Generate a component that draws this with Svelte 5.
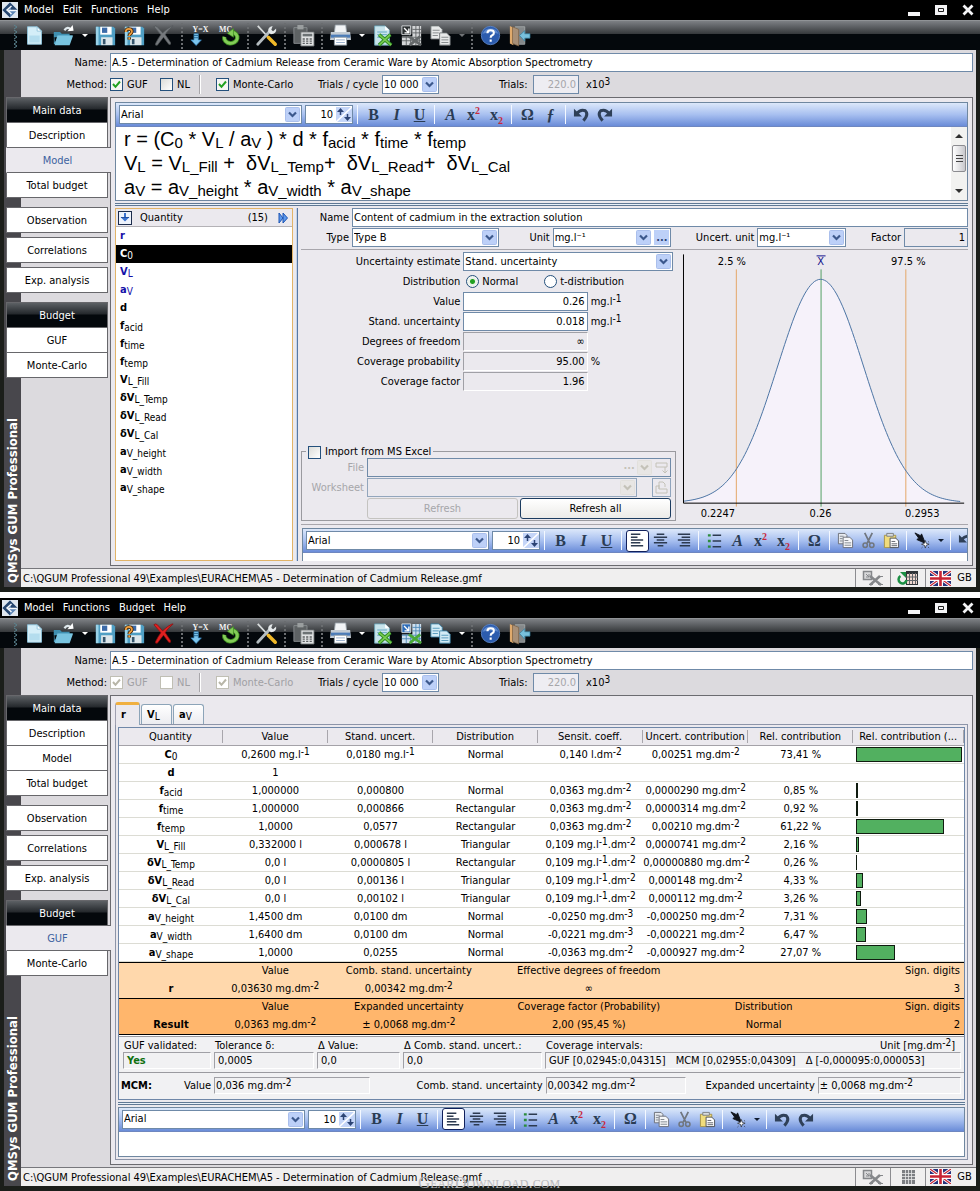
<script>
  const path = 'C:\\QGUM Professional 49\\Examples\\EURACHEM\\A5 - Determination of Cadmium Release.gmf';
  const modelName = 'A.5 - Determination of Cadmium Release from Ceramic Ware by Atomic Absorption Spectrometry';

  const windows = [
    { id: 'model', menu: ['Model', 'Edit', 'Functions', 'Help'], locked: false, selected: 'Model' },
    { id: 'budget', menu: ['Model', 'Functions', 'Budget', 'Help'], locked: true, selected: 'GUF' }
  ];

  const toolbar = [
    'new', 'open', 'drop', 'save', 'saveas', 'delete', '|', 'yx', 'mc', '|', 'tools', '|', 'calc', '|',
    'print', 'drop', 'excel', 'grid', 'docs', 'dropdim', '|', 'help', 'exit'
  ];

  const navGroups = [
    ['#Main data', 'Description', 'Model', 'Total budget'],
    ['Observation'],
    ['Correlations'],
    ['Exp. analysis'],
    ['#Budget', 'GUF', 'Monte-Carlo']
  ];

  const quantities = [
    ['r', '', 'calc'], ['C', '0', 'active'], ['V', 'L', 'calc'], ['a', 'V', 'calc'], ['d', ''],
    ['f', 'acid'], ['f', 'time'], ['f', 'temp'], ['V', 'L_Fill'], ['δV', 'L_Temp'], ['δV', 'L_Read'],
    ['δV', 'L_Cal'], ['a', 'V_height'], ['a', 'V_width'], ['a', 'V_shape']
  ];

  const formulas = [
    'r = (C~0~ * V~L~ / a~V~ ) * d * f~acid~ * f~time~ * f~temp~',
    'V~L~ = V~L_Fill~ +\u00a0 δV~L_Temp~+\u00a0 δV~L_Read~+\u00a0 δV~L_Cal~',
    'a~V~ = a~V_height~ * a~V_width~ * a~V_shape~'
  ];

  const columns = [
    'Quantity', 'Value', 'Stand. uncert.', 'Distribution', 'Sensit. coeff.',
    'Uncert. contribution', 'Rel. contribution', 'Rel. contribution (...'
  ];

  const budget = [
    ['C', '0', '0,2600 mg.l^-1', '0,0180 mg.l^-1', 'Normal', '0,140 l.dm^-2', '0,00251 mg.dm^-2', 73.41],
    ['d', '', '1', '', '', '', '', null],
    ['f', 'acid', '1,000000', '0,000800', 'Normal', '0,0363 mg.dm^-2', '0,0000290 mg.dm^-2', 0.85],
    ['f', 'time', '1,000000', '0,000866', 'Rectangular', '0,0363 mg.dm^-2', '0,0000314 mg.dm^-2', 0.92],
    ['f', 'temp', '1,0000', '0,0577', 'Rectangular', '0,0363 mg.dm^-2', '0,00210 mg.dm^-2', 61.22],
    ['V', 'L_Fill', '0,332000 l', '0,000678 l', 'Triangular', '0,109 mg.l^-1^.dm^-2', '0,0000741 mg.dm^-2', 2.16],
    ['δV', 'L_Temp', '0,0 l', '0,0000805 l', 'Rectangular', '0,109 mg.l^-1^.dm^-2', '0,00000880 mg.dm^-2', 0.26],
    ['δV', 'L_Read', '0,0 l', '0,00136 l', 'Triangular', '0,109 mg.l^-1^.dm^-2', '0,000148 mg.dm^-2', 4.33],
    ['δV', 'L_Cal', '0,0 l', '0,00102 l', 'Triangular', '0,109 mg.l^-1^.dm^-2', '0,000112 mg.dm^-2', 3.26],
    ['a', 'V_height', '1,4500 dm', '0,0100 dm', 'Normal', '-0,0250 mg.dm^-3', '-0,000250 mg.dm^-2', 7.31],
    ['a', 'V_width', '1,6400 dm', '0,0100 dm', 'Normal', '-0,0221 mg.dm^-3', '-0,000221 mg.dm^-2', 6.47],
    ['a', 'V_shape', '1,0000', '0,0255', 'Normal', '-0,0363 mg.dm^-2', '-0,000927 mg.dm^-2', 27.07]
  ];

  const percent = (n) => n.toFixed(2).replace('.', ',') + ' %';

  // Normal density, centred on x = 142 with 1.96 sigma = 85 units
  const sigma = 85 / 1.96;
  const curve = [];
  for (let x = 4; x <= 282; x += 2) {
    curve.push(`${x},${(253 - 224 * Math.exp(-(((x - 142) / sigma) ** 2) / 2)).toFixed(1)}`);
  }
</script>

{#snippet rich(text)}{#each text.split('^') as part, i}{#if i % 2}<sup>{part}</sup>{:else}{part}{/if}{/each}{/snippet}

{#snippet symbol(base, sub)}<b>{base}</b>{#if sub}<sub>{sub}</sub>{/if}{/snippet}

{#snippet chevron(dim = false)}
  <svg class="chev" class:dim viewBox="0 0 15 15" aria-hidden="true">
    <rect x="0.5" y="0.5" width="14" height="14" rx="1" />
    <path d="M4 5.500l3.500 3.500L11 5.500" />
  </svg>
{/snippet}

{#snippet toolIcon(name, locked)}
  <svg class="ticon" viewBox="0 0 24 24" aria-hidden="true">
    {#if name === 'new'}
      <path d="M4 2h11l5 5v15H4z" fill="#d4eef8" stroke="#8fc4dc" />
      <path d="M6 12h12v8H6z" fill="#9fd2e8" opacity=".6" />
      <path d="M15 2v5h5z" fill="#fff" stroke="#8fc4dc" />
    {:else if name === 'open'}
      <path d="M1 8h7l2 2h9v4H1z" fill="#3f8fb0" />
      <path d="M1 8v14h17l4-10H6L2 20z" fill="#4f9fc0" />
      <path d="M5 12h18l-4 11H2z" fill="#79c4e0" />
      <path d="M13 6q4-5 7-1" fill="none" stroke="#dfe8ec" stroke-width="2.500" />
      <path d="M16.500 7l7-.5-1-6.500z" fill="#fff" />
    {:else if name === 'save' || name === 'saveas'}
      <path d="M1 2h20l2 2v19H1z" fill="#4f9fc4" />
      <path d="M1 2h3v21H1z" fill="#9ad2e8" />
      <path d="M6 2h13v9H6z" fill="#fff" />
      <path d="M8 3h6v6H8z" fill="#3c6ba8" />
      <path d="M7 14h13v9H7z" fill="#dce6ea" />
      <path d="M9 16h3v6H9z" fill="#35556c" />
      {#if name === 'saveas'}
        <path d="M2 8q0-3.500 3.500-3.500T9 7.500q0 1.700-1.800 2.700Q6 11 6 12.500M6 14v2.500" fill="none" stroke="#4a2c0c" stroke-width="4" />
        <path d="M2 8q0-3.500 3.500-3.500T9 7.500q0 1.700-1.800 2.700Q6 11 6 12.500M6 14v2.500" fill="none" stroke="#f0a040" stroke-width="2" />
      {/if}
    {:else if name === 'delete'}
      <path d="M1 2q2-2 4 0l6 7Q17 3 22 1q2 0 0 1-6 5-8 9l6 9q1 3-2 2l-6-8q-4 5-7 9-3 1-2-2 3-6 6-10z" fill={locked ? '#e02020' : '#74787c'} stroke={locked ? '#8c0c0c' : '#505458'} stroke-width=".8" />
    {:else if name === 'yx'}
      <text x="12" y="8" text-anchor="middle" class="glyph">Y=X</text>
      <path d="M4.500 10h5v7h3.500L7 23.500l-6-6.500h3.500z" fill="#7cc4ec" stroke="#2f7cb4" stroke-width=".8" />
      <path d="M4.500 12h5M4.500 14.500h5" stroke="#24648f" />
    {:else if name === 'mc'}
      <text x="7.500" y="8" text-anchor="middle" class="glyph">MC</text>
      <path d="M6 13.500a7.500 6.500 0 1 0 8.500-5.500" fill="none" stroke="#3c8c20" stroke-width="5" />
      <path d="M6 13.500a7.500 6.500 0 1 0 8.500-5.500" fill="none" stroke="#84cc58" stroke-width="3.200" />
      <path d="M9.500 9.500l7-5.500v10z" fill="#84cc58" stroke="#3c8c20" stroke-width=".8" />
    {:else if name === 'tools'}
      <path d="M2 1l12 13" stroke="#d8dcdc" stroke-width="2" />
      <path d="M14 14l8 8" stroke="#f0b828" stroke-width="4" stroke-linecap="round" />
      <path d="M2 22l13-14" stroke="#b4bcc0" stroke-width="3.200" stroke-linecap="round" />
      <path d="M14 8q-1-6 5-7l-1.500 4.500 2 1.500L23 4q1 6-6 6.500z" fill="#e4e8ea" />
    {:else if name === 'calc'}
      <path d="M1 3h15v18H1z" fill="#5e6264" stroke="#8c9092" />
      <path d="M5 0h7v5H5z" fill="#9a9e9f" />
      <path d="M9 8h15v16H9z" fill="#e0e2e3" stroke="#6c7072" />
      <path d="M11 10h11v3H11z" fill="#6c7274" />
      <path d="M11 16h11M11 18.500h11M11 21h11" stroke="#5c6062" stroke-width="1.500" stroke-dasharray="2.500 1.500" />
    {:else if name === 'print'}
      <path d="M6 0h12l1 9H5z" fill="#f2f4f6" stroke="#9aa4ac" />
      <path d="M1 8h22l1 9H0z" fill="#c4ccd4" />
      <path d="M1 11h22v3.500H1z" fill="#4c7cb8" />
      <path d="M5 14h14v9H5z" fill="#fff" stroke="#8c98a4" />
      <path d="M7 17h10M7 20h10" stroke="#90a8c8" />
    {:else if name === 'excel'}
      <path d="M3 1h12l5 5v17H3z" fill="#c8e4ec" stroke="#6ca4b8" />
      <path d="M15 1v5h5z" fill="#fff" />
      <path d="M6 8h11M6 11h11M6 14h11" stroke="#58a0c0" />
      <path d="M8 11l14 12M21 11L8 23" stroke="#2f8c24" stroke-width="4" />
      <path d="M8 11l14 12M21 11L8 23" stroke="#78cc50" stroke-width="1.800" />
    {:else if name === 'grid'}
      <path d="M13 1h10v22H1V13h12z" fill={locked ? '#cfe0ee' : '#d4d6d8'} />
      <path d="M13 5h10M13 9h10M1 14h22M1 18h22M17 1v22M21 1v22M6 13v10M11 13v10" stroke={locked ? '#4c88b8' : '#5c6062'} />
      <path d="M1 1h10v10H1z" fill={locked ? '#2c6cb8' : '#2c3032'} stroke="#e0e4e6" />
      <path d="M3.500 3.500l5 5M9 4v5H4" fill="none" stroke="#fff" stroke-width="1.600" />
      <path d="M9 13l14 10M22 13L10 23" stroke={locked ? '#48a838' : '#64686a'} stroke-width="3" />
    {:else if name === 'docs'}
      <path d="M1 1h9l4 4v11H1z" fill={locked ? '#d4ecf6' : '#e8eaea'} stroke={locked ? '#3c84a8' : '#6c7072'} />
      <path d="M11 9h8l4 4v10H11z" fill={locked ? '#d4ecf6' : '#e8eaea'} stroke={locked ? '#3c84a8' : '#6c7072'} />
      <path d="M3 6h8M3 9h7M3 12h6M13 14h8M13 17h8M13 20h8" stroke={locked ? '#4c94b8' : '#7c8082'} />
    {:else if name === 'help'}
      <circle cx="12" cy="12" r="10.500" fill="#2c5cae" stroke="#5c84c4" />
      <path d="M3 10a9.500 9 0 0 1 18 0q-9-3-18 0z" fill="#5c88cc" />
      <path d="M8.500 9.500q0-3.500 3.700-3.500t3.600 3q0 1.800-1.900 2.800-1.700.8-1.700 2.700M12.200 16.500v2.500" fill="none" stroke="#fff" stroke-width="2.400" />
    {:else if name === 'exit'}
      <path d="M7 2h11v20H7z" fill="#84888a" stroke="#a4a8aa" />
      <path d="M1 1l4 2v20l-4-2z" fill="#e0aa6c" />
      <path d="M4 2l7 3v19l-7-3z" fill="#a89078" stroke="#7c6040" stroke-width=".8" />
      <path d="M12 12l6-5.500v3.500h6v5h-6v3.500z" fill="#78c0dc" stroke="#347c9c" stroke-width=".8" />
    {/if}
  </svg>
{/snippet}

{#snippet editIcon(name)}
  <svg class="eicon" viewBox="0 0 18 18" aria-hidden="true">
    {#if name === 'left'}
      <path d="M2 2.500h10M2 5.500h7M2 8.500h13M2 11.500h10M2 14.500h13" class="bars" />
    {:else if name === 'center'}
      <path d="M5 2.500h8M2 5.500h14M5 8.500h8M2 11.500h14M6 14.500h6" class="bars" />
    {:else if name === 'right'}
      <path d="M3 2.500h13M7 5.500h9M3 8.500h13M7 11.500h9M5 14.500h11" class="bars" />
    {:else if name === 'list'}
      <path d="M7 3.500h9M7 9.500h9M7 15.500h9" class="bars" />
      <path d="M2 3.500h3M2 9.500h3M2 15.500h3" stroke="#2c8c3c" stroke-width="2.500" />
    {:else if name === 'undo'}
      <path d="M1 3v8h8.500z" fill="#2f4058" />
      <path d="M4 8q4-5 9-3 4 4-2 10.500" fill="none" stroke="#2f4058" stroke-width="3.200" />
    {:else if name === 'redo'}
      <path d="M17 3v8H8.500z" fill="#2f4058" />
      <path d="M14 8q-4-5-9-3-4 4 2 10.500" fill="none" stroke="#2f4058" stroke-width="3.200" />
    {:else if name === 'copy'}
      <path d="M1.500 1.500h7l2 2v9h-9z" fill="#e8ebf0" stroke="#6c7078" />
      <path d="M6.500 5.500h7l3 3v8h-10z" fill="#f6f7f9" stroke="#6c7078" />
      <path d="M8 9h4M8 11.500h7M8 14h7M3 4.500h4M3 7h3M3 9.500h3" stroke="#80858c" />
    {:else if name === 'cut'}
      <path d="M5 1l5.500 11M13 1L7.500 12" fill="none" stroke="#70767e" stroke-width="1.800" />
      <circle cx="5.500" cy="14" r="2.300" fill="none" stroke="#70767e" stroke-width="1.600" />
      <circle cx="12.500" cy="14" r="2.300" fill="none" stroke="#70767e" stroke-width="1.600" />
    {:else if name === 'paste'}
      <path d="M1.500 3.500h12v13h-12z" fill="#f0dc7c" stroke="#a89448" />
      <path d="M4 1.500h7v3H4z" fill="#d8dce0" stroke="#7c8084" />
      <path d="M7.500 6.500h6l3 3v7h-9z" fill="#fff" stroke="#4c5058" />
      <path d="M9 10h4M9 12.500h6M9 14.500h6" stroke="#5c6068" />
    {:else if name === 'marker'}
      <path d="M1 1l6 3 1-2 4 10-9-4 2-1.500z" fill="#10141c" stroke="#10141c" />
      <path d="M12 9l1 3 3 1-3 1-1 3-1-3-3-1 3-1zM15 10l1 1M9 16l-1 1M15 16l1 1" fill="#fff" stroke="#2c3038" stroke-width=".8" />
    {/if}
  </svg>
{/snippet}

{#snippet editorBar(align)}
  <div class="ebar" role="toolbar" aria-label="Text formatting">
    <span class="combo face">
      <select aria-label="Font"><option>Arial</option></select>
      {@render chevron()}
    </span>
    <span class="spin">
      <input type="text" value="10" aria-label="Font size" />
      <svg viewBox="0 0 16 15" aria-hidden="true">
        <rect width="16" height="15" fill="#c4d5f8" />
        <path d="M0 15L16 0" stroke="#fff" stroke-width="1.500" />
        <path d="M1 5l3.500-4L8 5zM8 10h7l-3.500 4z" fill="#2c4474" />
        <path d="M4.500 4v4M11.500 7v4" stroke="#2c4474" stroke-width="1.500" />
      </svg>
    </span>
    <i class="sep"></i>
    <button class="ch">B</button>
    <button class="ch it">I</button>
    <button class="ch"><u>U</u></button>
    <i class="sep"></i>
    {#if align}
      <button class="on" aria-label="Align left">{@render editIcon('left')}</button>
      <button aria-label="Align centre">{@render editIcon('center')}</button>
      <button aria-label="Align right">{@render editIcon('right')}</button>
      <i class="sep"></i>
      <button aria-label="Bullets">{@render editIcon('list')}</button>
    {/if}
    <button class="ch it">A</button>
    <button class="ch">x<em class="hi">2</em></button>
    <button class="ch">x<em class="lo">2</em></button>
    <i class="sep"></i>
    <button class="ch">Ω</button>
    {#if align}
      <i class="sep"></i>
      <button aria-label="Copy">{@render editIcon('copy')}</button>
      <button aria-label="Cut">{@render editIcon('cut')}</button>
      <button aria-label="Paste">{@render editIcon('paste')}</button>
      <i class="sep"></i>
      <button aria-label="Marker">{@render editIcon('marker')}</button>
      <button class="tri" aria-label="Marker options"></button>
    {:else}
      <button class="ch it">ƒ</button>
    {/if}
    <i class="sep"></i>
    <button aria-label="Undo">{@render editIcon('undo')}</button>
    <button aria-label="Redo">{@render editIcon('redo')}</button>
  </div>
{/snippet}

{#snippet modelPanel()}
  <div class="editor">
    {@render editorBar(false)}
    <div class="formula-box">
      <div class="formula" contenteditable="true" role="textbox" tabindex="0" aria-label="Model equation">
        {#each formulas as line}
          <p>{#each line.split('~') as part, i}{#if i % 2}<sub>{part}</sub>{:else}{part}{/if}{/each}</p>
        {/each}
      </div>
      <div class="scroll">
        <i class="up"></i>
        <span></span>
        <i class="down"></i>
      </div>
    </div>
  </div>
  <div class="splitter"></div>

  <div class="lower">
    <div class="list">
      <header>
        <svg class="sortbox" viewBox="0 0 14 14" aria-hidden="true">
          <rect x=".5" y=".5" width="13" height="13" fill="#eef3fc" stroke="#1c2c4c" />
          <path d="M6 2h2v4h3.500L7 10.500 2.500 6H6z" fill="#3c74d0" />
          <path d="M3 6.500h8" stroke="#2450a0" />
        </svg>
        <span>Quantity</span>
        <span class="count">(15)</span>
        <svg class="fwd" viewBox="0 0 10 12" aria-hidden="true">
          <path d="M1 1l4 5-4 5zM5 1l4.500 5L5 11z" fill="#5c98ec" stroke="#1c54b4" />
        </svg>
      </header>
      <ul>
        {#each quantities as [base, sub, kind]}
          <li class={kind}>{@render symbol(base, sub)}</li>
        {/each}
      </ul>
    </div>
    <div class="vsplit"></div>

    <div class="detail">
      <div class="head">
        <label for="q-name">Name</label>
        <input id="q-name" class="fill" type="text" value="Content of cadmium in the extraction solution" />
        <label for="q-type">Type</label>
        <span class="combo"><select id="q-type"><option>Type B</option></select>{@render chevron()}</span>
        <label for="q-unit">Unit</label>
        <span class="combo more">
          <select id="q-unit"><option>mg.l⁻¹</option></select>{@render chevron()}
          <button aria-label="Edit unit">...</button>
        </span>
        <label for="q-uunit">Uncert. unit</label>
        <span class="combo"><select id="q-uunit"><option>mg.l⁻¹</option></select>{@render chevron()}</span>
        <label for="q-factor">Factor</label>
        <input id="q-factor" class="num flat" type="text" value="1" readonly />
      </div>

      <div class="mid">
        <div class="form">
          <div class="fields">
            <label for="f-est">Uncertainty estimate</label>
            <span class="combo span2"><select id="f-est"><option>Stand. uncertainty</option></select>{@render chevron()}</span>
            <span class="lab">Distribution</span>
            <span class="radios span2">
              <label><input type="radio" name="dist" checked />Normal</label>
              <label><input type="radio" name="dist" />t-distribution</label>
            </span>
            <label for="f-val">Value</label>
            <input id="f-val" class="num" type="text" value="0.26" />
            <span>{@render rich('mg.l^-1')}</span>
            <label for="f-su">Stand. uncertainty</label>
            <input id="f-su" class="num" type="text" value="0.018" />
            <span>{@render rich('mg.l^-1')}</span>
            <label for="f-df">Degrees of freedom</label>
            <input id="f-df" class="num sunk" type="text" value="∞" readonly />
            <span></span>
            <label for="f-cp">Coverage probability</label>
            <input id="f-cp" class="num sunk" type="text" value="95.00" readonly />
            <span>%</span>
            <label for="f-cf">Coverage factor</label>
            <input id="f-cf" class="num sunk" type="text" value="1.96" readonly />
            <span></span>
          </div>

          <fieldset>
            <legend><label><input type="checkbox" />Import from MS Excel</label></legend>
            <div class="import">
              <label for="x-file">File</label>
              <span class="combo off wide">
                <input id="x-file" type="text" disabled />
                <span class="dots">...</span>
                {@render chevron(true)}
                <svg class="mini" viewBox="0 0 15 15" aria-hidden="true"><path d="M2 3h11v4H2zM11 7v6M8.500 10.500L11 13l2.500-2.500" /></svg>
              </span>
              <label for="x-sheet">Worksheet</label>
              <span class="combo off"><select id="x-sheet" disabled><option></option></select>{@render chevron(true)}</span>
              <button class="openx" disabled aria-label="Open worksheet">
                <svg class="mini" viewBox="0 0 15 15" aria-hidden="true"><path d="M5 6V2h4l2 2v3M2 6h3v3h8v4H2zM5 9V5" /></svg>
              </button>
              <div class="pair">
                <button class="push" disabled>Refresh</button>
                <button class="push main">Refresh all</button>
              </div>
            </div>
          </fieldset>
        </div>

        <svg class="chart" viewBox="0 0 290 272" role="img" aria-label="Probability density">
          <polygon points="4,253 {curve.join(' ')} 282,253" fill="#f6f2fa" />
          <path d="M57.500 19v238M227.500 19v238" stroke="#e4a868" />
          <path d="M142.500 19v238" stroke="#54a064" />
          <polyline points={curve.join(' ')} fill="none" stroke="#4c74a4" />
          <path d="M4.500 4v249.500h281.500" fill="none" stroke="#000" />
          <text x="53" y="15">2.5 %</text>
          <text x="142" y="15" fill="#10108c">X</text>
          <path d="M138 5.500h9" stroke="#10108c" />
          <text x="230" y="15">97.5 %</text>
          <text x="39" y="267">0.2247</text>
          <text x="142" y="267">0.26</text>
          <text x="244" y="267">0.2953</text>
        </svg>
      </div>

      <div class="editor note">
        {@render editorBar(true)}
        <div class="blank slim" contenteditable="true" role="textbox" tabindex="0" aria-label="Quantity description"></div>
      </div>
    </div>
  </div>
{/snippet}

{#snippet budgetPanel()}
  <div class="tabs" role="tablist">
    <button role="tab" aria-selected="true" class="cur"><b>r</b></button>
    <button role="tab" aria-selected="false">{@render symbol('V', 'L')}</button>
    <button role="tab" aria-selected="false">{@render symbol('a', 'V')}</button>
  </div>
  <div class="page">
    <div class="sheet">
      <table class="data">
        <colgroup><col class="q" /><col /><col /><col /><col /><col /><col /><col class="g" /></colgroup>
        <thead>
          <tr>{#each columns as c}<th><span>{c}</span></th>{/each}</tr>
        </thead>
        <tbody>
          {#each budget as [base, sub, value, unc, dist, coef, contrib, rel]}
            <tr>
              <td>{@render symbol(base, sub)}</td>
              <td>{@render rich(value)}</td>
              <td>{@render rich(unc)}</td>
              <td>{dist}</td>
              <td>{@render rich(coef)}</td>
              <td>{@render rich(contrib)}</td>
              <td>{rel === null ? '' : percent(rel)}</td>
              <td class="graph">{#if rel !== null}<i style="width: {(rel / 73.41) * 100}%"></i>{/if}</td>
            </tr>
          {/each}
        </tbody>
      </table>
      <table class="totals">
        <colgroup><col /><col /><col /><col /><col /><col /></colgroup>
        <tbody class="light">
          <tr><td></td><td>Value</td><td>Comb. stand. uncertainty</td><td>Effective degrees of freedom</td><td></td><td>Sign. digits</td></tr>
          <tr><th>r</th><td>{@render rich('0,03630 mg.dm^-2')}</td><td>{@render rich('0,00342 mg.dm^-2')}</td><td>∞</td><td></td><td>3</td></tr>
        </tbody>
        <tbody class="deep">
          <tr><td></td><td>Value</td><td>Expanded uncertainty</td><td>Coverage factor (Probability)</td><td>Distribution</td><td>Sign. digits</td></tr>
          <tr><th>Result</th><td>{@render rich('0,0363 mg.dm^-2')}</td><td>{@render rich('± 0,0068 mg.dm^-2')}</td><td>2,00 (95,45 %)</td><td>Normal</td><td>2</td></tr>
        </tbody>
      </table>
      <div class="checks">
        <div><span>GUF validated:</span><output class="yes">Yes</output></div>
        <div><span>Tolerance δ:</span><output>0,0005</output></div>
        <div><span>Δ Value:</span><output>0,0</output></div>
        <div><span>Δ Comb. stand. uncert.:</span><output>0,0</output></div>
        <div>
          <span class="both"><span>Coverage intervals:</span><span>{@render rich('Unit [mg.dm^-2^]')}</span></span>
          <output class="trio">
            <span>GUF [0,02945:0,04315]</span><span>MCM [0,02955:0,04309]</span><span>Δ [-0,000095:0,000053]</span>
          </output>
        </div>
      </div>
      <div class="mcm">
        <b>MCM:</b>
        <span class="lab">Value</span><output>{@render rich('0,036 mg.dm^-2')}</output>
        <span class="lab">Comb. stand. uncertainty</span><output>{@render rich('0,00342 mg.dm^-2')}</output>
        <span class="lab">Expanded uncertainty</span><output>{@render rich('± 0,0068 mg.dm^-2')}</output>
      </div>
    </div>
    <div class="splitter"></div>
    <div class="editor">
      {@render editorBar(true)}
      <div class="blank" contenteditable="true" role="textbox" tabindex="0" aria-label="Remark"></div>
    </div>
  </div>
{/snippet}

<main>
  {#each windows as w}
    <section class="window">
      <header class="title">
        <svg class="logo" viewBox="0 0 16 16" aria-hidden="true">
          <rect width="16" height="16" fill="#dfe6ee" />
          <path d="M8 .5L15.500 8 8 15.500.5 8z" fill="#5c84b4" />
          <path d="M8 .5L15.500 8H9V5L5.500 8.500 8 11v4.500L.5 8z" fill="#27466f" />
          <path d="M9.500 4L5 8l4.500 4M6.500 8.500H15" fill="none" stroke="#f4f8fc" stroke-width="1.500" />
        </svg>
        <nav>{#each w.menu as m}<a href="#{m}">{m}</a>{/each}</nav>
        <div class="wbtns">
          <button aria-label="Minimise"><svg viewBox="0 0 12 12"><path d="M0 8h12v4H0z" fill="#f4f4f6" /></svg></button>
          <button aria-label="Maximise"><svg viewBox="0 0 12 12"><path d="M0 1h12v10H0z" fill="#f4f4f6" /><path d="M3.500 4.500h5v3h-5z" fill="none" stroke="#202020" /></svg></button>
          <button aria-label="Close"><svg viewBox="0 0 12 12"><path d="M1.500 1.500l9 9M10.500 1.500l-9 9" stroke="#f4f4f6" stroke-width="2.800" /></svg></button>
        </div>
      </header>

      <div class="toolbar" role="toolbar" aria-label="Main">
        <svg class="grip" viewBox="0 0 6 24" aria-hidden="true">
          <path d="M1 1l3 2-3 2M1 6l3 2-3 2M1 11l3 2-3 2M1 16l3 2-3 2M1 20l3 2-3 2" fill="none" stroke="#5c8490" />
        </svg>
        {#each toolbar as t}
          {#if t === '|'}
            <i class="tsep"></i>
          {:else if t.startsWith('drop')}
            <button class="tdrop" class:dim={t === 'dropdim' && !w.locked} aria-label="More"></button>
          {:else}
            <button class="tbtn" aria-label={t}>{@render toolIcon(t, w.locked)}</button>
          {/if}
        {/each}
      </div>

      <div class="body">
        <div class="rail"><span>QMSys GUM Professional</span></div>
        <div class="work">
          <div class="props">
            <div class="prow">
              <label class="lead" for="{w.id}-name">Name:</label>
              <input id="{w.id}-name" class="fill" type="text" value={modelName} />
            </div>
            <div class="prow">
              <span class="lead">Method:</span>
              <label class="tick c1" class:off={w.locked}><input type="checkbox" checked disabled={w.locked} />GUF</label>
              <label class="tick c2" class:off={w.locked}><input type="checkbox" disabled={w.locked} />NL</label>
              <i class="rule"></i>
              <label class="tick c3" class:off={w.locked}><input type="checkbox" checked disabled={w.locked} />Monte-Carlo</label>
              <label class="cyc" for="{w.id}-cycle">Trials / cycle</label>
              <span class="combo cycle"><select id="{w.id}-cycle"><option>10 000</option></select>{@render chevron()}</span>
              <label class="tri-lab" for="{w.id}-trials">Trials:</label>
              <input id="{w.id}-trials" class="trials num" type="text" value="220.0" disabled />
              <span class="exp">{@render rich('x10^3')}</span>
            </div>
          </div>

          <div class="middle">
            <nav class="side">
              {#each navGroups as group}
                <div class="group">
                  {#each group as item}
                    {#if item.startsWith('#')}
                      <h2>{item.slice(1)}</h2>
                    {:else}
                      <button class:sel={item === w.selected}>{item}</button>
                    {/if}
                  {/each}
                </div>
              {/each}
            </nav>
            <div class="panel">
              {#if w.id === 'model'}{@render modelPanel()}{:else}{@render budgetPanel()}{/if}
            </div>
          </div>

          <footer>
            <span class="path">{path}</span>
            {#if w.locked}<span class="mark">GearDownload.com</span>{/if}
            <span class="cell">
              <svg viewBox="0 0 22 16" aria-hidden="true">
                <path d="M1.500 1.500h8v8h-8z" fill="#d8d8da" stroke="#85878a" stroke-width="1.500" />
                <path d="M4 4l3 3M7 4v3H4" fill="none" stroke="#85878a" />
                <path d="M8 6l11 9M18 6L8 15" stroke="#85878a" stroke-width="2.500" />
                <path d="M16 14.500h5M16 6.500h5M7 14.500h4" stroke="#85878a" />
              </svg>
            </span>
            <span class="cell">
              <svg viewBox="0 0 22 16" aria-hidden="true">
                {#if w.locked}
                  <path d="M5 1h13v14H5z" fill="#7c7e82" />
                  <path d="M5 4.500h13M5 7.500h13M5 10.500h13M8.500 1v14M11.500 1v14M14.500 1v14" stroke="#e8e8ea" stroke-width=".8" />
                {:else}
                  <path d="M9 1h12v14H9z" fill="#303438" />
                  <path d="M10 4h10v10H10z" fill="#f0d8d0" />
                  <path d="M9 7h12M9 10.500h12M12.500 3v11M15.500 3v11M18.500 3v11" stroke="#606468" />
                  <path d="M3.500 6a4 4 0 1 0 6 4" fill="none" stroke="#1c9044" stroke-width="2.500" />
                  <path d="M3 2h6v6z" fill="#1c9044" />
                {/if}
              </svg>
            </span>
            <span class="cell lang">
              <svg viewBox="0 0 21 15" aria-hidden="true">
                <rect width="21" height="15" fill="#26337c" />
                <path d="M0 0l21 15M21 0L0 15" stroke="#fff" stroke-width="3" />
                <path d="M0 0l21 15M21 0L0 15" stroke="#c82434" stroke-width="1.200" />
                <path d="M10.500 0v15M0 7.500h21" stroke="#fff" stroke-width="5" />
                <path d="M10.500 0v15M0 7.500h21" stroke="#c82434" stroke-width="2.600" />
              </svg>
              GB
            </span>
          </footer>
        </div>
      </div>
    </section>
  {/each}
</main>

<style>
  :global(body) { background: #fff; }
  main {
    display: flex; flex-direction: column; gap: 6px;
    font: 11px/16px "DejaVu Sans Condensed", Tahoma, "Noto Sans", sans-serif; color: #000;
  }
  main :global(*) { box-sizing: border-box; }
  button, input, select { font: inherit; color: inherit; margin: 0; border-radius: 0; min-width: 0; }
  button { padding: 0; border: 0; background: none; white-space: nowrap; }
  sup, sub { font-size: 10px; line-height: 0; font-weight: 400; }
  sup { vertical-align: 3px; }
  sub { vertical-align: -2px; }
  svg { display: block; flex: none; }
  label, span { white-space: nowrap; }

  .window { background: #000; border-bottom: 5px solid #1b1e1a; }
  .title { display: flex; align-items: center; height: 20px; padding: 0 6px 0 2px; color: #fff; }
  .logo { width: 16px; height: 16px; }
  .title nav { display: flex; gap: 9px; padding-left: 6px; flex: 1; line-height: 18px; }
  .title a { color: #fff; text-decoration: none; }
  .wbtns { display: flex; gap: 15px; }
  .wbtns button, .wbtns svg { width: 12px; height: 12px; }

  .toolbar {
    display: flex; align-items: center; height: 30px; padding-left: 13px;
    background: linear-gradient(#7d8084 0, #35383b 13px, #04080c 13px);
    border-top: 1px solid #909396;
  }
  .grip { width: 6px; height: 24px; margin-right: 1px; }
  .tbtn { width: 29px; display: flex; justify-content: center; }
  .ticon { width: 21px; height: 21px; overflow: visible; }
  .glyph { font: bold 9px "Liberation Serif", serif; fill: #f4f4f4; }
  .tsep { width: 8px; height: 26px; display: flex; }
  .tsep::before { content: ""; margin-left: 3px; border-left: 2px dotted #6a6d70; }
  .tdrop { width: 13px; height: 20px; display: grid; place-items: center; }
  .tdrop::before { content: ""; border: 3px solid transparent; border-top-color: #fff; border-bottom: 0; }
  .tdrop.dim::before { border-top-color: #707376; }

  .body { display: grid; grid-template-columns: 17px minmax(0, 1fr); border: solid #1b1e1a; border-width: 0 4px; background: #dcdade; }
  .rail { background: #48474c; display: flex; align-items: flex-end; justify-content: center; padding-bottom: 4px; }
  .rail span { writing-mode: vertical-rl; transform: rotate(180deg); color: #fff; font-weight: 700; font-size: 13px; line-height: 16px; }

  .props { display: flex; flex-direction: column; gap: 3px; padding: 3px 3px 3px 0; }
  .prow { display: flex; align-items: center; height: 19px; }
  .lead { width: 86px; margin-right: 3px; text-align: right; flex: none; }
  input[type='text'], select {
    height: 19px; width: 100%; padding: 0 1px; border: 1px solid #6f8aa8; background: #fff; appearance: none; outline: 0;
  }
  .fill { flex: 1; }
  .num { text-align: right; }
  .tick { display: flex; align-items: center; gap: 4px; }
  .c1 { width: 50px; }
  .c2 { width: 39px; }
  .c3 { width: 102px; margin-left: 15px; }
  .tick.off { color: #a0a0a4; }
  input[type='checkbox'] {
    appearance: none; width: 13px; height: 13px; border: 1px solid #24507c; flex: none;
    background: linear-gradient(135deg, #dcdcd8, #fff);
  }
  input[type='checkbox']:checked {
    background: url("data:image/svg+xml,%3Csvg xmlns='http://www.w3.org/2000/svg' viewBox='0 0 11 11'%3E%3Cpath d='M2 5l2.500 2.800L9 2.500' fill='none' stroke='%2321a121' stroke-width='2'/%3E%3C/svg%3E") #f6f6f4;
  }
  input[type='checkbox']:disabled { border-color: #c0bfb4; background: #fff; }
  input[type='checkbox']:checked:disabled {
    background: url("data:image/svg+xml,%3Csvg xmlns='http://www.w3.org/2000/svg' viewBox='0 0 11 11'%3E%3Cpath d='M2 5l2.500 2.800L9 2.500' fill='none' stroke='%23b8b6a8' stroke-width='2'/%3E%3C/svg%3E") #fff;
  }
  .rule { width: 2px; height: 19px; border-left: 1px solid #a8a6aa; border-right: 1px solid #fff; }
  .cyc { width: 64px; }
  .cycle { width: 57px; }
  .tri-lab { width: 94px; padding-left: 60px; }
  .trials { flex: none; }
  input.trials { width: 46px; color: #a6a6aa; background: #eeedf2; }
  .exp { margin-left: 7px; }

  .combo { position: relative; display: block; }
  .combo select { display: block; }
  .chev { position: absolute; right: 2px; top: 2px; width: 15px; height: 15px; pointer-events: none; }
  .chev rect { fill: #bdd0f8; stroke: #aabfec; }
  .chev path { fill: none; stroke: #3c588c; stroke-width: 2.2; }
  .chev.dim rect { fill: #e8e6e4; stroke: #e2e0dc; }
  .chev.dim path { stroke: #c4c2b8; }

  .middle { display: flex; padding: 0 3px 2px 0; }
  .side { width: 104px; margin-left: -15px; flex: none; display: flex; flex-direction: column; }
  .group { display: flex; flex-direction: column; margin-bottom: 4px; padding: 0 2px 1px 0; }
  .group:nth-child(1), .group:nth-child(4) { margin-bottom: 9px; }
  .side h2, .side button { height: 26px; margin: 0 0 -1px; padding-top: 2px; border: 1px solid #67676b; font-size: 11px; line-height: 22px; font-weight: 400; text-align: center; }
  .side button { background: #fff; }
  .side h2 { color: #fff; background: linear-gradient(#5c6064, #24282c 11px, #04080c 12px); }
  .side button.sel { position: relative; margin-right: -3px; padding-right: 3px; border-left-color: #ebe9ee; border-right: 0; background: #ebe9ee; color: #3c62a0; }

  .panel { flex: 1; min-width: 0; border: 1px solid #6b6b70; background: #ebe9ee; padding: 4px; display: flex; flex-direction: column; }
  .editor { border: 1px solid #6f87a0; background: #fff; }
  .ebar {
    display: flex; align-items: center; height: 24px; padding-left: 3px; overflow: hidden;
    background: linear-gradient(#dce8fa, #a8c0f0 50%, #6a8cd8); border-bottom: 1px solid #6f87c0;
  }
  .face { width: 183px; flex: none; margin-right: 3px; }
  .spin { position: relative; width: 48px; flex: none; margin-right: 1px; }
  .spin input { display: block; padding-right: 19px; text-align: right; }
  .spin svg { position: absolute; right: 1px; top: 2px; width: 16px; height: 15px; }
  .sep { width: 8px; height: 19px; flex: none; display: flex; }
  .sep::before { content: ""; margin-left: 3px; border-left: 1px solid #f4f8ff; }
  .ebar button { width: 23px; height: 22px; flex: none; display: flex; align-items: center; justify-content: center; }
  .ebar .on { border: 1px solid #10205c; border-radius: 3px; background: #fff; }
  .ebar .ch { font: bold 16px/18px "Liberation Serif", serif; color: #2a3c54; }
  .ebar .it { font-style: italic; }
  .ch em { font: bold 10px/10px "Liberation Serif", serif; color: #c8283c; }
  .hi { align-self: flex-start; padding-top: 2px; }
  .lo { align-self: flex-end; }
  .ebar .tri { width: 13px; }
  .tri::before { content: ""; border: 3px solid transparent; border-top-color: #101c30; border-bottom: 0; }
  .eicon { width: 17px; height: 17px; }
  .bars { stroke: #2c3a50; stroke-width: 1.6; }

  .formula-box { display: flex; height: 73px; }
  .formula { flex: 1; padding: 0 8px; outline: 0; font: 20px/24px "Liberation Sans", Arial, sans-serif; }
  .formula p { margin: 0; white-space: nowrap; }
  .formula sub { font-size: 15px; vertical-align: -2px; }
  .scroll { width: 16px; background: #f2f2f0; display: flex; flex-direction: column; align-items: center; padding: 7px 1px; }
  .scroll span {
    width: 14px; height: 27px; margin: 7px 0 auto; border: 1px solid #8c8c90; border-radius: 2px;
    background: linear-gradient(#444, #444) 3px 9px/7px 1px no-repeat, linear-gradient(#444, #444) 3px 12px/7px 1px no-repeat,
      linear-gradient(#444, #444) 3px 15px/7px 1px no-repeat, linear-gradient(90deg, #fff, #c8c8cc);
  }
  .up { border: 4px solid transparent; border-top: 0; border-bottom-color: #303030; }
  .down { border: 4px solid transparent; border-bottom: 0; border-top-color: #303030; }
  .splitter { height: 3px; margin: 2px 0; border: solid #5f7894; border-width: 1px 0; background: #e8f0f8; flex: none; }

  .lower { display: grid; grid-template-columns: 178px 2px minmax(0, 1fr); gap: 3px; min-height: 353px; }
  .list { border: 1px solid #e2b468; background: #fff; }
  .list header { display: flex; align-items: center; height: 18px; padding: 0 4px 0 2px; background: #ebe9ee; border-bottom: 1px solid #b4b2b6; }
  .sortbox { width: 14px; height: 14px; margin-right: 8px; }
  .count { margin-left: auto; margin-right: 10px; }
  .fwd { width: 10px; height: 12px; }
  ul { list-style: none; margin: 0; padding: 0; }
  li { height: 18px; padding-left: 4px; line-height: 18px; }
  .calc { color: #1410a8; }
  .active { color: #fff; background: #000; }
  .vsplit { border-left: 1px solid #c4d4e8; border-right: 1px solid #5878a4; }

  .detail { display: flex; flex-direction: column; min-width: 0; }
  .head {
    display: grid; gap: 1px 3px; align-items: center; padding-bottom: 2px; border-bottom: 1px solid #a8a6ac;
    grid-template-columns: 48px minmax(0, 147fr) minmax(0, 48fr) minmax(0, 119fr) minmax(0, 80fr) minmax(0, 89fr) minmax(0, 52fr) minmax(0, 64fr);
  }
  .head label, .lab, .fields > label, .import label { text-align: right; }
  .head .fill { grid-column: 2 / -1; }
  .head .flat { background: #ebe9ee; }
  .more .chev { right: 20px; }
  .more button { position: absolute; right: 2px; top: 2px; width: 15px; height: 15px; background: #bdd0f8; color: #2c4474; font-weight: 700; line-height: 12px; }
  .mid { flex: 1; display: grid; grid-template-columns: minmax(0, 376fr) minmax(0, 290fr); gap: 3px; border-bottom: 1px solid #a8a6ac; }
  .form { display: flex; flex-direction: column; justify-content: space-between; padding: 2px 0 3px; }
  .fields { display: grid; grid-template-columns: minmax(0, 159fr) minmax(0, 124fr) minmax(0, 82fr); gap: 1px 3px; align-items: center; padding-right: 3px; grid-auto-rows: 19px; }
  .span2 { grid-column: span 2; }
  .radios { display: flex; gap: 26px; padding-left: 3px; }
  .radios label { display: flex; align-items: center; gap: 3px; }
  input[type='radio'] { appearance: none; width: 13px; height: 13px; border: 1px solid #24507c; border-radius: 50%; background: #fff; }
  input[type='radio']:checked { background: radial-gradient(#21a121 2px, #e8f0e8 3px, #fff); }
  input.num { padding-right: 2px; }
  input.sunk { background: #ebe9ee; border-color: #a0a0a6 #fff #fff #a0a0a6; }
  fieldset { min-width: 0; margin: 0; padding: 0 4px 1px; border: 1px solid #9a9a9f; }
  legend { padding: 0 2px; height: 15px; }
  legend label { display: flex; align-items: center; gap: 4px; }
  .import { display: grid; grid-template-columns: 58px minmax(0, 270fr) minmax(0, 31fr); gap: 1px 3px; align-items: center; color: #a6a6aa; margin-top: -1px; }
  .import .wide { grid-column: 2 / -1; }
  .import input, .import select { background: #ebe9ee; }
  .off .dots { position: absolute; right: 36px; top: 0; font-weight: 700; color: #c4c2b8; }
  .wide .chev { right: 19px; }
  .mini { width: 15px; height: 15px; fill: none; stroke: #c4c2b8; }
  .wide .mini { position: absolute; right: 2px; top: 2px; }
  .openx { justify-self: end; width: 19px; height: 19px; border: 1px solid #8fa4bc; display: grid; place-items: center; }
  .pair { grid-column: 2 / -1; display: grid; grid-template-columns: 1fr 1fr; gap: 2px; }
  .push { height: 21px; border: 1px solid #c4c3c0; border-radius: 3px; color: #a6a6aa; }
  .main { border-color: #1c3c60; background: linear-gradient(#fff, #ecebe8); color: #000; }
  .chart { width: 100%; height: 272px; }
  .chart text { font-size: 11px; text-anchor: middle; }
  .note { margin: 3px 0 0 1px; border-bottom: 0; }
  .blank { height: 24px; outline: 0; }
  .slim { height: 8px; }

  .tabs { display: flex; gap: 1px; align-items: flex-end; height: 24px; }
  .tabs button { width: 31px; height: 20px; padding: 0 0 0 5px; text-align: left; border: 1px solid #8ca4b8; border-bottom: 0; border-radius: 3px 3px 0 0; background: linear-gradient(#fff, #ececf0); }
  .tabs .cur { width: 25px; height: 23px; border-top: 3px solid #f0b040; background: #ebe9ee; border-left-color: #a0a0b0; position: relative; margin-bottom: -1px; }
  .page { border: 1px solid #8c94a8; padding: 2px; }
  .sheet { border: 1px solid #6f87a8; background: #fff; }
  table { width: 100%; border-collapse: collapse; table-layout: fixed; text-align: center; }
  td, th { padding: 0; height: 18px; line-height: 16px; white-space: nowrap; font-weight: 400; }
  .q { width: 12.3%; }
  .g { width: 13.1%; }
  .data thead th { height: 17px; background: #ebe9ee; border-bottom: 1px solid #a4a2a8; }
  thead th span { display: block; line-height: 13px; border-right: 1px solid #a8a6ac; }
  .data td { padding-top: 1px; border-bottom: 1px solid #dcdcd4; }
  .data .graph { padding: 0 2px 0 3px; }
  .graph i { display: block; height: 15px; min-width: 1px; background: #52b060; box-shadow: inset 0 0 0 1px #101c10; }
  .totals col:nth-child(1) { width: 12.3%; }
  .totals col:nth-child(2) { width: 12.4%; }
  .totals col:nth-child(3) { width: 19.2%; }
  .totals col:nth-child(4) { width: 23.4%; }
  .totals col:nth-child(5) { width: 18%; }
  .totals td:last-child { text-align: right; padding-right: 4px; }
  .totals th { font-weight: 700; }
  .light { background: #ffd8ac; }
  .deep { background: #ffb66c; border: solid #000; border-width: 1px 0; }
  .light tr:first-child { border-top: 1px solid #000; }
  .checks {
    display: grid; gap: 3px; padding: 0 3px 3px 4px; margin-top: 1px; background: #f1f1f3;
    grid-template-columns: minmax(0, 88fr) minmax(0, 100fr) minmax(0, 83fr) minmax(0, 139fr) minmax(0, 416fr);
    border: solid #9a9aa0; border-width: 1px 0;
  }
  .checks div { display: flex; flex-direction: column; }
  .checks div > span { padding-left: 1px; height: 15px; line-height: 17px; }
  .checks .both { display: flex; justify-content: space-between; padding-right: 6px; }
  output { display: block; height: 17px; padding: 0 3px; border: 1px solid; border-color: #a0a0a6 #fff #fff #a0a0a6; white-space: nowrap; line-height: 16px; }
  .yes { color: #107010; font-weight: 700; }
  .trio { display: flex; gap: 10px; }
  .mcm {
    display: grid; gap: 3px; align-items: center; height: 26px; padding: 0 3px 0 2px; background: #f1f1f3;
    grid-template-columns: minmax(0, 50fr) minmax(0, 37fr) minmax(0, 156fr) minmax(0, 169fr) minmax(0, 140fr) minmax(0, 126fr) minmax(0, 143fr);
  }
  .mcm output { padding: 0 1px; }

  footer { position: relative; display: flex; height: 19px; background: #f0efef; border-top: 1px solid #77777c; }
  .path { flex: 1; padding-left: 2px; line-height: 19px; }
  .cell { width: 35px; border-left: 1px solid #8c8c90; display: flex; align-items: center; justify-content: center; }
  .cell svg { width: 22px; height: 16px; }
  .cell.lang { width: 51px; gap: 6px; }
  .lang svg { width: 21px; height: 15px; }
  .mark { position: absolute; left: 397px; top: 8px; font: 17px/14px "Liberation Serif", serif; font-variant: small-caps; color: #b8b8bc; }
</style>
